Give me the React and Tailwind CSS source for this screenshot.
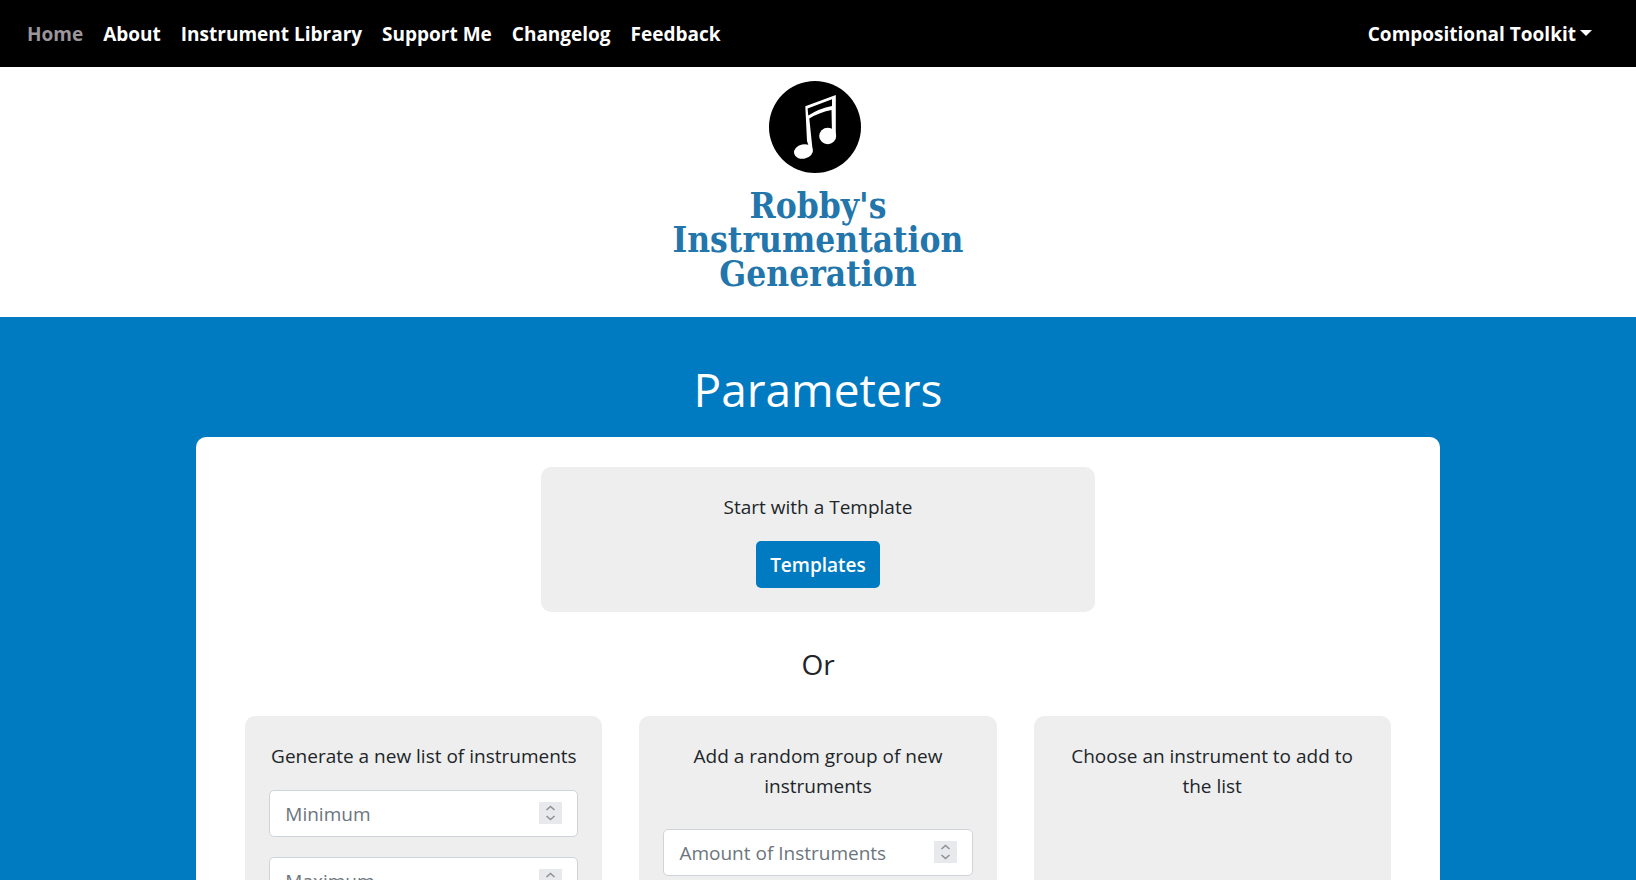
import { useState } from "react";

const NAV_LINKS = [
  "Home",
  "About",
  "Instrument Library",
  "Support Me",
  "Changelog",
  "Feedback",
];

function Logo() {
  return (
    <svg viewBox="0 0 92 92" className="h-[92px] w-[92px]" aria-hidden="true">
      <circle cx="46" cy="46" r="46" fill="#000" />
      <g fill="#fff">
        <path
          fillRule="evenodd"
          d="M36.3 25.2 L66.8 14 L66.8 55 L63 53 L62.5 29 Q51 31 40.3 37.5 L43.5 68 L40 66 L38 60 Z M38.6 27.5 L39.3 34.5 Q50 27.5 63 25 L63 18.2 Z"
        />
        <ellipse cx="58.7" cy="55" rx="8.5" ry="8.2" />
        <ellipse cx="34.5" cy="70.5" rx="9.6" ry="7.2" transform="rotate(-12 34.5 70.5)" />
      </g>
    </svg>
  );
}

function NumberField({ label }) {
  const [value, setValue] = useState("");

  return (
    <div className="relative">
      <input
        type="number"
        aria-label={label}
        placeholder={label}
        value={value}
        onChange={(e) => setValue(e.target.value)}
        className="block h-[47px] w-full rounded-[5px] border border-[#ced4da] bg-white px-[15px] text-[19px] text-[#212529] placeholder:text-[#6c757d] [&::-webkit-inner-spin-button]:appearance-none"
      />
      {/* stepper */}
      <svg
        viewBox="0 0 23 22"
        className="pointer-events-none absolute top-3 right-4 h-[22px] w-[23px] bg-[#e8e9ed]"
        fill="none"
        stroke="#919191"
        strokeWidth="1.6"
        aria-hidden="true"
      >
        <path d="M7.5 8 L11.5 4.5 L15.5 8 M7.5 14 L11.5 17.5 L15.5 14" />
      </svg>
    </div>
  );
}

function Card({ title, children }) {
  return (
    <section className="rounded-[10px] bg-[#eee] px-6 pt-[25px] pb-6 text-center">
      <h3 className="text-[19px] leading-[30px]">{title}</h3>
      {children}
    </section>
  );
}

export default function App() {
  return (
    <div className="flex h-screen flex-col overflow-hidden bg-[#007bc2] font-['Open_Sans','Noto_Sans',sans-serif] text-[#212529]">
      <nav className="flex h-[67px] shrink-0 items-center justify-between bg-black pt-0.5 pr-11 pl-[27px] text-[19px] font-bold text-white">
        <ul className="flex gap-5">
          {NAV_LINKS.map((name) => (
            <li key={name}>
              <a href="#" className={name === "Home" ? "text-[#9b959c]" : ""}>
                {name}
              </a>
            </li>
          ))}
        </ul>
        <button type="button" className="flex items-center gap-1">
          Compositional Toolkit
          <svg viewBox="0 0 12 6" className="mb-1 h-1.5 w-3" fill="currentColor" aria-hidden="true">
            <path d="M0 0 H12 L6 6 Z" />
          </svg>
        </button>
      </nav>

      <header className="flex h-[250px] shrink-0 flex-col items-center bg-white pt-3.5">
        <div className="pr-1.5">
          <Logo />
        </div>
        <h1 className="mt-4 text-center font-['DejaVu_Serif_Condensed','DejaVu_Serif',serif] text-[35px] leading-[34px] font-bold text-[#2376ab]">
          Robby's
          <br />
          Instrumentation
          <br />
          Generation
        </h1>
      </header>

      <main className="flex flex-1 shrink-0 flex-col items-center pt-[42px]">
        <h2 className="text-[46px] leading-[60px] text-white">Parameters</h2>
        <div className="mt-[18px] flex w-[76%] flex-1 flex-col items-center rounded-t-[10px] bg-white px-[49px] pt-[30px]">
          <div className="w-[554px] max-w-full">
            <Card title="Start with a Template">
              <button
                type="button"
                className="mt-[19px] h-[47px] rounded-[5px] bg-[#007bc2] px-3.5 pt-0.5 text-[19px] font-semibold text-white"
              >
                Templates
              </button>
            </Card>
          </div>

          <p className="my-[34px] text-[28px] leading-9">Or</p>

          <div className="grid w-full grid-cols-3 gap-[37px]">
            <Card title="Generate a new list of instruments">
              <div className="mt-[19px] flex flex-col gap-5">
                <NumberField label="Minimum" />
                <NumberField label="Maximum" />
              </div>
            </Card>
            <Card title="Add a random group of new instruments">
              <div className="mt-7">
                <NumberField label="Amount of Instruments" />
              </div>
            </Card>
            <Card title="Choose an instrument to add to the list" />
          </div>
        </div>
      </main>
    </div>
  );
}
